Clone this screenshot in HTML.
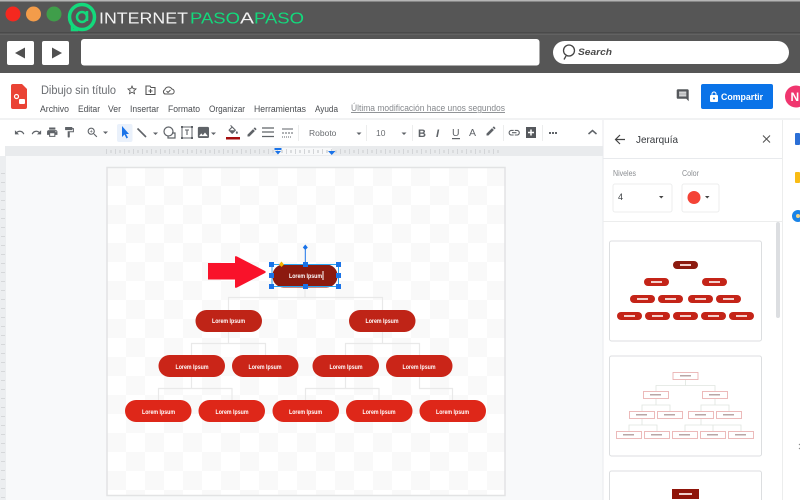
<!DOCTYPE html>
<html lang="es"><head><meta charset="utf-8"><title>Dibujo sin título</title>
<style>
html,body{margin:0;padding:0;background:#fff;width:800px;height:500px;overflow:hidden}
svg{display:block;font-family:"Liberation Sans",sans-serif;filter:blur(.3px)}
.m{font-size:9px;fill:#4a4d51}
.p{fill:#fff;font-size:6.5px;font-weight:bold;text-anchor:middle}
.t{fill:none;stroke:#e9e9e9;stroke-width:1.2}
</style></head><body>
<svg width="800" height="500" viewBox="0 0 800 500" xmlns="http://www.w3.org/2000/svg">
<defs>
<pattern id="ck" x="107" y="167" width="38" height="38" patternUnits="userSpaceOnUse">
<rect width="38" height="38" fill="#fff"/><rect width="19" height="19" fill="#f9f9f9"/><rect x="19" y="19" width="19" height="19" fill="#f9f9f9"/>
</pattern>
<pattern id="rt" x="106" y="146" width="9" height="10" patternUnits="userSpaceOnUse">
<rect x="0" y="3" width="1" height="5" fill="#d3d5d8"/><rect x="4" y="4" width="2" height="3" fill="#dadcde"/>
</pattern>
<pattern id="lt" x="0" y="170" width="6" height="9" patternUnits="userSpaceOnUse">
<rect x="1" y="3" width="4" height="1" fill="#d6d8da"/>
</pattern>
</defs>

<!-- browser chrome -->
<rect width="800" height="73" fill="#565656"/>
<rect width="800" height="1.500" fill="#b5b5b5"/>
<rect y="32.500" width="800" height="1" fill="#3e3e3e"/>
<rect y="33.500" width="800" height="1" fill="#6d6d6d"/>
<circle cx="13" cy="14" r="7.500" fill="#f5281f"/>
<circle cx="33.500" cy="14" r="7.500" fill="#f39c4a"/>
<circle cx="54" cy="14" r="7.500" fill="#3f9e4a"/>
<circle cx="82" cy="17" r="12.500" fill="none" stroke="#13d97c" stroke-width="3.500"/>
<circle cx="82" cy="17" r="5" fill="none" stroke="#13d97c" stroke-width="2.500"/>
<path d="M87 11 L87 21 M78 30 L72 30 L72 25" fill="none" stroke="#13d97c" stroke-width="2.500"/>
<text x="99" y="23.500" font-size="15.500" fill="#f2f2f2" textLength="89" lengthAdjust="spacingAndGlyphs">INTERNET</text>
<text x="190" y="23.500" font-size="15.500" fill="#13d97c" textLength="50" lengthAdjust="spacingAndGlyphs">PASO</text>
<text x="240" y="23.500" font-size="15.500" fill="#f2f2f2" textLength="14" lengthAdjust="spacingAndGlyphs">A</text>
<text x="254" y="23.500" font-size="15.500" fill="#13d97c" textLength="50" lengthAdjust="spacingAndGlyphs">PASO</text>
<rect x="7" y="41" width="27" height="24" rx="2" fill="#fff"/>
<path d="M15 53 L25 47.500 V58.500Z" fill="#505050"/>
<rect x="42" y="41" width="27" height="24" rx="2" fill="#fff"/>
<path d="M62 53 L52 47.500 V58.500Z" fill="#505050"/>
<rect x="81" y="39" width="458.500" height="26.500" rx="3" fill="#fff"/>
<rect x="553" y="41" width="236" height="23" rx="11.500" fill="#fff"/>
<circle cx="569" cy="50.500" r="5.500" fill="none" stroke="#444" stroke-width="1.300"/>
<path d="M566 56 L564 59.500" stroke="#444" stroke-width="1.300"/>
<text x="578" y="55" font-size="9" font-style="italic" font-weight="bold" fill="#4a4a4a" textLength="34" lengthAdjust="spacingAndGlyphs">Search</text>

<!-- docs header -->
<path d="M13 84 H22 L27 89 V107 a2 2 0 0 1 -2 2 H13 a2 2 0 0 1 -2 -2 V86 a2 2 0 0 1 2 -2Z" fill="#ea4335"/>
<circle cx="16.500" cy="96.500" r="2" fill="none" stroke="#fff" stroke-width="1.200"/>
<rect x="19" y="99" width="6" height="5" rx="1" fill="#fff"/>
<text x="41" y="94" font-size="11.500" fill="#6a6d71" textLength="75" lengthAdjust="spacingAndGlyphs">Dibujo sin título</text>
<path transform="translate(126,84) scale(.5)" d="M22 9.240l-7.190-.620L12 2 9.190 8.630 2 9.240l5.460 4.730L5.820 21 12 17.270 18.180 21l-1.630-7.030L22 9.240zM12 15.400l-3.760 2.270 1-4.280-3.320-2.880 4.380-.380L12 6.100l1.710 4.040 4.380.380-3.320 2.880 1 4.280L12 15.400z" fill="#444"/>
<path d="M146 86 H150 L151 87.500 H155 V94.500 H146Z M150.500 89 V93 M148.500 91 H152.500" fill="none" stroke="#555" stroke-width="1.100"/>
<path d="M166 94 H171.500 a2.500 2.500 0 0 0 .3 -5 a3.800 3.800 0 0 0 -7 .8 a2.200 2.200 0 0 0 1.200 4.200Z M166.500 91 L168 92.500 L170.500 90" fill="none" stroke="#555" stroke-width="1"/>
<text class="m" x="40" y="112" textLength="29" lengthAdjust="spacingAndGlyphs">Archivo</text>
<text class="m" x="78" y="112" textLength="22" lengthAdjust="spacingAndGlyphs">Editar</text>
<text class="m" x="108" y="112" textLength="13" lengthAdjust="spacingAndGlyphs">Ver</text>
<text class="m" x="130" y="112" textLength="29" lengthAdjust="spacingAndGlyphs">Insertar</text>
<text class="m" x="168" y="112" textLength="32" lengthAdjust="spacingAndGlyphs">Formato</text>
<text class="m" x="209" y="112" textLength="36" lengthAdjust="spacingAndGlyphs">Organizar</text>
<text class="m" x="254" y="112" textLength="52" lengthAdjust="spacingAndGlyphs">Herramientas</text>
<text class="m" x="315" y="112" textLength="23" lengthAdjust="spacingAndGlyphs">Ayuda</text>
<text x="351" y="111" font-size="9" fill="#85888c" text-decoration="underline" textLength="154" lengthAdjust="spacingAndGlyphs">Última modificación hace unos segundos</text>
<path transform="translate(675.500,88) scale(.6)" d="M21.990 4c0-1.100-.890-2-1.990-2H4c-1.100 0-2 .900-2 2v12c0 1.100.900 2 2 2h14l4 4-.010-18zM18 14H6v-2h12v2zm0-3H6V9h12v2zm0-3H6V6h12v2z" fill="#55585c"/>
<rect x="701" y="84" width="72" height="25" rx="2" fill="#0a73e8"/>
<path transform="translate(708,91) scale(.5)" d="M18 8h-1V6c0-2.760-2.240-5-5-5S7 3.240 7 6v2H6c-1.100 0-2 .900-2 2v10c0 1.100.900 2 2 2h12c1.100 0 2-.900 2-2V10c0-1.100-.900-2-2-2zm-6 9c-1.100 0-2-.900-2-2s.900-2 2-2 2 .900 2 2-.900 2-2 2zm3.100-9H8.900V6c0-1.710 1.390-3.100 3.100-3.100 1.710 0 3.100 1.390 3.100 3.100v2z" fill="#fff"/>
<text x="721" y="100" font-size="9" font-weight="bold" fill="#fff" textLength="42" lengthAdjust="spacingAndGlyphs">Compartir</text>
<circle cx="796" cy="96.500" r="11" fill="#f0366f"/>
<text x="790.500" y="101" font-size="12" font-weight="bold" fill="#fff">N</text>

<!-- toolbar -->
<rect y="118" width="800" height="2" fill="#f1f2f3"/>
<rect y="120" width="603" height="26" fill="#fff"/>
<g fill="#5f6368">
<path transform="translate(14,127) scale(.46)" d="M12.500 8c-2.650 0-5.050.990-6.900 2.600L2 7v9h9l-3.620-3.620c1.390-1.160 3.160-1.880 5.120-1.880 3.540 0 6.550 2.310 7.600 5.500l2.370-.780C21.080 11.030 17.150 8 12.500 8z"/>
<path transform="translate(31,127) scale(.46)" d="M18.400 10.600C16.550 8.990 14.150 8 11.500 8c-4.650 0-8.580 3.030-9.960 7.220L3.900 16c1.050-3.190 4.050-5.500 7.600-5.500 1.950 0 3.730.720 5.120 1.880L13 16h9V7l-3.600 3.600z"/>
<path transform="translate(46,126) scale(.52)" d="M19 8H5c-1.660 0-3 1.340-3 3v6h4v4h12v-4h4v-6c0-1.660-1.340-3-3-3zm-3 11H8v-5h8v5zm3-7c-.550 0-1-.450-1-1s.450-1 1-1 1 .450 1 1-.450 1-1 1zm-1-9H6v4h12V3z"/>
<path transform="translate(63,126) scale(.52)" d="M18 4V3c0-.550-.450-1-1-1H5c-.550 0-1 .450-1 1v4c0 .550.450 1 1 1h12c.550 0 1-.450 1-1V6h1v4H9v11c0 .550.450 1 1 1h2c.550 0 1-.450 1-1v-9h8V4h-3z"/>
<path transform="translate(86,126) scale(.55)" d="M15.500 14h-.790l-.280-.270C15.410 12.590 16 11.110 16 9.500 16 5.910 13.090 3 9.500 3S3 5.910 3 9.500 5.910 16 9.500 16c1.610 0 3.090-.590 4.230-1.570l.270.280v.790l5 4.990L20.490 19l-4.990-5zm-6 0C7.010 14 5 11.990 5 9.500S7.010 5 9.500 5 14 7.010 14 9.500 11.990 14 9.500 14zm2.500-4h-2v2H9v-2H7V9h2V7h1v2h2v1z"/>
<path d="M103 131.500 h5 l-2.500 2.500Z"/>
</g>
<rect x="117" y="124" width="15.500" height="18" rx="2" fill="#eaf1fb"/>
<path d="M122 126 V137 L124.500 134.500 L126.500 138.500 L128 137.500 L126 134 H129Z" fill="#1a73e8"/>
<path d="M137.500 128.500 L146 137" stroke="#5f6368" stroke-width="1.600"/>
<path d="M153 132.500 h5 l-2.500 2.500Z" fill="#5f6368"/>
<circle cx="168.500" cy="131.500" r="4.500" fill="none" stroke="#5f6368" stroke-width="1.200"/>
<path d="M172 133 H175 V138 H168 V136" fill="none" stroke="#5f6368" stroke-width="1.200"/>
<rect x="182" y="127" width="10" height="11" fill="none" stroke="#5f6368" stroke-width="1"/>
<path d="M185 130 H189 M187 130 V135" stroke="#5f6368" stroke-width="1.100"/>
<path d="M181 126 h2v2h-2Z M191 126 h2v2h-2Z M181 137 h2v2h-2Z M191 137 h2v2h-2Z" fill="#5f6368"/>
<path transform="translate(196,125) scale(.62)" d="M21 19V5c0-1.100-.900-2-2-2H5c-1.100 0-2 .900-2 2v14c0 1.100.900 2 2 2h14c1.100 0 2-.900 2-2zM8.500 13.500l2.500 3.010L14.500 12l4.500 6H5l3.500-4.500z" fill="#5f6368"/>
<path d="M211 132.500 h5 l-2.500 2.500Z" fill="#5f6368"/>
<path transform="translate(227,125) scale(.52)" d="M16.560 8.940L7.620 0 6.210 1.410l2.380 2.380-5.150 5.150c-.590.590-.590 1.540 0 2.120l5.500 5.500c.290.290.680.440 1.060.440s.770-.150 1.060-.440l5.500-5.500c.590-.580.590-1.530 0-2.120zM5.210 10L10 5.210 14.790 10H5.210zM19 11.500s-2 2.170-2 3.500c0 1.100.900 2 2 2s2-.900 2-2c0-1.330-2-3.500-2-3.500z" fill="#5f6368"/>
<rect x="226" y="137" width="14" height="2.500" fill="#a50e0e"/>
<path transform="translate(246,126) scale(.5)" d="M3 17.250V21h3.750L17.810 9.940l-3.750-3.750L3 17.250zM20.710 7.040c.390-.390.390-1.020 0-1.410l-2.340-2.340c-.390-.390-1.020-.390-1.410 0l-1.830 1.830 3.750 3.750 1.830-1.830z" fill="#5f6368"/>
<path d="M262 128 H274 M262 132 H274 M262 136.500 H274" stroke="#5f6368" stroke-width="1.300"/>
<path d="M282 129 H293 M282 133 h2 m1 0 h2 m1 0 h2 m1 0 h2 M282 137 h1 m1 0 h1 m1 0 h1 m1 0 h1 m1 0 h1" stroke="#5f6368" stroke-width="1"/>
<rect x="298" y="125" width="1" height="16" fill="#eceded"/>
<text x="309" y="136" font-size="8.500" fill="#6a6d71">Roboto</text>
<path d="M356.500 132.500 h5 l-2.500 2.500Z" fill="#5f6368"/>
<rect x="366" y="125" width="1" height="16" fill="#eceded"/>
<text x="376" y="136" font-size="8.500" fill="#6a6d71">10</text>
<path d="M401.500 132.500 h5 l-2.500 2.500Z" fill="#5f6368"/>
<rect x="412" y="125" width="1" height="16" fill="#eceded"/>
<text x="418" y="137" font-size="11" font-weight="bold" fill="#5f6368">B</text>
<text x="436" y="137" font-size="11" font-style="italic" font-weight="bold" fill="#5f6368">I</text>
<text x="452" y="136" font-size="10.500" fill="#5f6368">U</text>
<rect x="452" y="138" width="8" height="1.200" fill="#5f6368"/>
<text x="469" y="136" font-size="10.500" fill="#5f6368">A</text>
<path transform="translate(485,125) scale(.5)" d="M3 17.250V21h3.750L17.810 9.940l-3.750-3.750L3 17.250zM20.710 7.040c.390-.390.390-1.020 0-1.410l-2.340-2.340c-.390-.390-1.020-.390-1.410 0l-1.830 1.830 3.750 3.750 1.830-1.830z" fill="#5f6368"/>
<rect x="503" y="125" width="1" height="16" fill="#eceded"/>
<path transform="translate(507.500,126) scale(.56)" d="M3.900 12c0-1.710 1.390-3.100 3.100-3.100h4V7H7c-2.760 0-5 2.240-5 5s2.240 5 5 5h4v-1.900H7c-1.710 0-3.100-1.390-3.100-3.100zM8 13h8v-2H8v2zm9-6h-4v1.900h4c1.710 0 3.100 1.390 3.100 3.100s-1.390 3.100-3.100 3.100h-4V17h4c2.760 0 5-2.240 5-5s-2.240-5-5-5z" fill="#5f6368"/>
<path d="M526 127 H536 V138 H526Z" fill="#55585c"/>
<path d="M531 129.500 V135.500 M528 132.500 H534" stroke="#fff" stroke-width="1.500"/>
<rect x="542" y="125" width="1" height="16" fill="#eceded"/>
<path d="M549 132 h2v2h-2Z M552 132 h2v2h-2Z M555 132 h2v2h-2Z" fill="#5f6368"/>
<path d="M588.500 134 L592.500 130.500 L596.500 134" fill="none" stroke="#5f6368" stroke-width="1.500"/>

<!-- workspace -->
<rect y="146" width="603" height="354" fill="#f8f9fa"/>
<rect y="146" width="603" height="10" fill="#e9ebed"/>
<rect x="106" y="146" width="394" height="10" fill="url(#rt)"/>
<rect x="278" y="148" width="54" height="7" fill="#f7f8f9"/>
<rect x="278" y="148" width="54" height="7" fill="url(#rt)"/>
<path d="M274.500 148 H281.500 V150 H274.500Z M275 151 H281 L278 154.500Z" fill="#1a73e8"/>
<path d="M328 151 H335.500 L331.700 155Z" fill="#1a73e8"/>
<rect y="146" width="5" height="10" fill="#fff"/>
<rect y="156" width="6" height="344" fill="#eceef0"/>
<rect y="170" width="6" height="330" fill="url(#lt)"/>

<!-- canvas -->
<rect x="107" y="167.500" width="398" height="328" fill="url(#ck)" stroke="#e2e3e4" stroke-width="1.500"/>

<!-- connectors -->
<g class="t">
<path d="M305 287 V297.500 M228.500 310 V297.500 H382.500 V310"/>
<path d="M228.500 332 V343.500 M191.500 355 V343.500 H265.500 V355"/>
<path d="M382.500 332 V343.500 M345.500 355 V343.500 H419.500 V355"/>
<path d="M191.500 377 V388.500 M158.500 400 V388.500 H232 V400"/>
<path d="M345.500 377 V388.500 M305.500 400 V388.500 H379 V400"/>
<path d="M419.500 377 V388.500 H452.500 V400"/>
</g>

<!-- arrow -->
<path d="M208 263 H235 V257 Q235 255.500 237 256.500 L265 271 Q266.500 272 265 273 L237 287.500 Q235 288.500 235 287 V279.500 H208Z" fill="#f9122a"/>

<!-- nodes -->
<rect x="272.500" y="264.500" width="65" height="23" rx="11" fill="#8c1a0f"/>
<g fill="#bf2417"><rect x="195.500" y="310" width="66.500" height="22" rx="11"/><rect x="349" y="310" width="66.500" height="22" rx="11"/></g>
<g fill="#ca2518"><rect x="158.500" y="355" width="66.500" height="22" rx="11"/><rect x="232" y="355" width="66.500" height="22" rx="11"/><rect x="312.500" y="355" width="66.500" height="22" rx="11"/><rect x="386" y="355" width="66.500" height="22" rx="11"/></g>
<g fill="#de2719"><rect x="125" y="400" width="66.500" height="22" rx="11"/><rect x="198.500" y="400" width="66.500" height="22" rx="11"/><rect x="272.500" y="400" width="66.500" height="22" rx="11"/><rect x="346" y="400" width="66.500" height="22" rx="11"/><rect x="419.500" y="400" width="66.500" height="22" rx="11"/></g>
<g>
<text class="p" x="305.500" y="278" textLength="33" lengthAdjust="spacingAndGlyphs">Lorem Ipsum</text>
<text class="p" x="228.500" y="323" textLength="33" lengthAdjust="spacingAndGlyphs">Lorem Ipsum</text>
<text class="p" x="382" y="323" textLength="33" lengthAdjust="spacingAndGlyphs">Lorem Ipsum</text>
<text class="p" x="192" y="369" textLength="33" lengthAdjust="spacingAndGlyphs">Lorem Ipsum</text>
<text class="p" x="265" y="369" textLength="33" lengthAdjust="spacingAndGlyphs">Lorem Ipsum</text>
<text class="p" x="346" y="369" textLength="33" lengthAdjust="spacingAndGlyphs">Lorem Ipsum</text>
<text class="p" x="419" y="369" textLength="33" lengthAdjust="spacingAndGlyphs">Lorem Ipsum</text>
<text class="p" x="158.500" y="414" textLength="33" lengthAdjust="spacingAndGlyphs">Lorem Ipsum</text>
<text class="p" x="232" y="414" textLength="33" lengthAdjust="spacingAndGlyphs">Lorem Ipsum</text>
<text class="p" x="305.500" y="414" textLength="33" lengthAdjust="spacingAndGlyphs">Lorem Ipsum</text>
<text class="p" x="379" y="414" textLength="33" lengthAdjust="spacingAndGlyphs">Lorem Ipsum</text>
<text class="p" x="452.500" y="414" textLength="33" lengthAdjust="spacingAndGlyphs">Lorem Ipsum</text>
</g>
<rect x="322.500" y="271" width="1" height="9" fill="#fff"/>

<!-- selection -->
<rect x="272" y="264.500" width="66.500" height="22" fill="none" stroke="#29a3f0" stroke-width="1"/>
<path d="M305.300 247.500 V264" stroke="#1a73e8" stroke-width="1"/>
<path d="M305.300 244.500 L307.800 247.500 L305.300 250 L302.800 247.500Z" fill="#1a73e8"/>
<g fill="#1a73e8">
<rect x="269" y="262" width="5" height="5"/><rect x="303" y="262" width="5" height="5"/><rect x="336" y="262" width="5" height="5"/>
<rect x="269" y="273" width="5" height="5"/><rect x="336" y="273" width="5" height="5"/>
<rect x="269" y="284" width="5" height="5"/><rect x="303" y="284" width="5" height="5"/><rect x="336" y="284" width="5" height="5"/>
</g>
<path d="M281.500 261.500 L284 264.500 L281.500 267 L279 264.500Z" fill="#f4b400"/>

<!-- panel -->
<rect x="603" y="120" width="197" height="380" fill="#fff"/>
<rect x="602.500" y="120" width="1" height="380" fill="#e8eaed"/>
<rect x="782" y="120" width="1" height="380" fill="#eceded"/>
<rect x="603" y="158" width="179" height="1" fill="#e8eaed"/>
<path d="M625 139.500 H616 M620 135 L615.500 139.500 L620 144" fill="none" stroke="#444" stroke-width="1.200"/>
<text x="636" y="143" font-size="10.500" fill="#35383c" textLength="42" lengthAdjust="spacingAndGlyphs">Jerarquía</text>
<path d="M763 135.500 L770 142.500 M770 135.500 L763 142.500" stroke="#555" stroke-width="1.100"/>
<text x="613" y="176" font-size="8" fill="#8a8d91" textLength="23" lengthAdjust="spacingAndGlyphs">Niveles</text>
<text x="682" y="176" font-size="8" fill="#8a8d91" textLength="17" lengthAdjust="spacingAndGlyphs">Color</text>
<rect x="613" y="184" width="59" height="28" rx="2" fill="#fff" stroke="#eceded"/>
<text x="618" y="200" font-size="9" fill="#3c4043">4</text>
<path d="M659 196 h4.500 l-2.250 2.500Z" fill="#444"/>
<rect x="682" y="184" width="37" height="28" rx="2" fill="#fff" stroke="#eceded"/>
<circle cx="694" cy="197.500" r="6.500" fill="#f44336"/>
<path d="M705 196 h4.500 l-2.250 2.500Z" fill="#444"/>
<rect x="603" y="221" width="179" height="1" fill="#eceded"/>
<rect x="776" y="222" width="4" height="96" rx="2" fill="#dcdee1"/>

<!-- card 1 -->
<rect x="609.500" y="241" width="152" height="100" rx="2" fill="#fff" stroke="#dcdee0"/>
<g fill="#8c1a0f"><rect x="673" y="261" width="25" height="8" rx="4"/></g>
<g fill="#c42418"><rect x="644" y="278" width="25" height="8" rx="4"/><rect x="702" y="278" width="25" height="8" rx="4"/><rect x="630" y="295" width="25" height="8" rx="4"/><rect x="658" y="295" width="25" height="8" rx="4"/><rect x="688" y="295" width="25" height="8" rx="4"/><rect x="716" y="295" width="25" height="8" rx="4"/><rect x="617" y="312" width="25" height="8" rx="4"/><rect x="645" y="312" width="25" height="8" rx="4"/><rect x="673" y="312" width="25" height="8" rx="4"/><rect x="701" y="312" width="25" height="8" rx="4"/><rect x="729" y="312" width="25" height="8" rx="4"/></g>
<g fill="#f3cfcb"><rect x="680" y="264" width="11" height="2"/><rect x="651" y="281" width="11" height="2"/><rect x="709" y="281" width="11" height="2"/><rect x="637" y="298" width="11" height="2"/><rect x="665" y="298" width="11" height="2"/><rect x="695" y="298" width="11" height="2"/><rect x="723" y="298" width="11" height="2"/><rect x="624" y="315" width="11" height="2"/><rect x="652" y="315" width="11" height="2"/><rect x="680" y="315" width="11" height="2"/><rect x="708" y="315" width="11" height="2"/><rect x="736" y="315" width="11" height="2"/></g>

<!-- card 2 -->
<rect x="609.500" y="356" width="152" height="100" rx="2" fill="#fff" stroke="#dcdee0"/>
<path d="M685.500 380 V385.500 M656 391 V385.500 H715 V391 M656 399 V405 M642 411 V405 H670 V411 M715 399 V405 M701 411 V405 H729 V411 M642 419 V425 M629 431 V425 H657 V431 M701 419 V425 M685 431 V425 H741 V431 M713 425 V431" fill="none" stroke="#dfe5df" stroke-width=".8"/>
<g fill="#fff" stroke="#e8a9a9" stroke-width=".8">
<rect x="673" y="372.500" width="25" height="7"/><rect x="643.500" y="391.500" width="25" height="7"/><rect x="702.500" y="391.500" width="25" height="7"/>
<rect x="629.500" y="411.500" width="25" height="7"/><rect x="657.500" y="411.500" width="25" height="7"/><rect x="688.500" y="411.500" width="25" height="7"/><rect x="716.500" y="411.500" width="25" height="7"/>
<rect x="616.500" y="431.500" width="25" height="7"/><rect x="644.500" y="431.500" width="25" height="7"/><rect x="672.500" y="431.500" width="25" height="7"/><rect x="700.500" y="431.500" width="25" height="7"/><rect x="728.500" y="431.500" width="25" height="7"/>
</g>
<g fill="#b9a6a6"><rect x="680" y="375" width="11" height="1.500"/><rect x="650" y="394" width="11" height="1.500"/><rect x="709" y="394" width="11" height="1.500"/><rect x="636" y="414" width="11" height="1.500"/><rect x="664" y="414" width="11" height="1.500"/><rect x="695" y="414" width="11" height="1.500"/><rect x="723" y="414" width="11" height="1.500"/><rect x="623" y="434" width="11" height="1.500"/><rect x="651" y="434" width="11" height="1.500"/><rect x="679" y="434" width="11" height="1.500"/><rect x="707" y="434" width="11" height="1.500"/><rect x="735" y="434" width="11" height="1.500"/></g>

<!-- card 3 -->
<rect x="609.500" y="471" width="152" height="40" rx="2" fill="#fff" stroke="#dcdee0"/>
<rect x="672" y="489" width="27" height="10" fill="#8f1409"/>
<rect x="679" y="493" width="13" height="2" fill="#f0cfcb"/>

<!-- side rail -->
<rect x="795" y="133" width="5" height="12" rx="1" fill="#2b6fd6"/>
<rect x="795" y="172" width="5" height="11" rx="1" fill="#f9bc15"/>
<circle cx="798" cy="216" r="6" fill="#1a84e8"/>
<circle cx="798" cy="216" r="2" fill="#f4d58a"/>
<path d="M799 444 l1 1 M799 449 l1 -1" stroke="#888" stroke-width="1"/>
</svg>
</body></html>
